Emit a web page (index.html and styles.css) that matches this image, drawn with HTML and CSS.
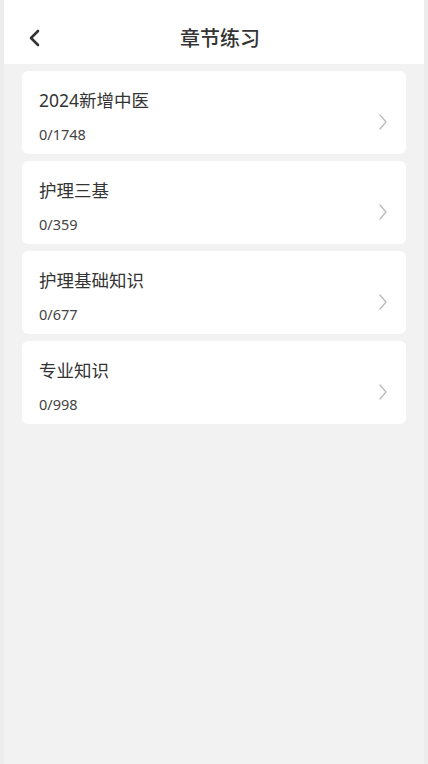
FILE: index.html
```html
<!DOCTYPE html>
<html lang="zh-CN">
<head>
    <meta charset="UTF-8">
    <meta name="viewport" content="width=device-width, initial-scale=1.0">
    <title>章节练习</title>
    <link rel="stylesheet" href="styles.css">
</head>
<body>

    <div class="page">
        <div class="top-bar">
            <span class="back">
                <svg width="14" height="18" viewBox="0 0 14 18">
                    <path d="M10 2 L3 9 L10 16" fill="none" stroke="#333" stroke-width="2.6" stroke-linecap="round" stroke-linejoin="round"/>
                </svg>
            </span>
            <h1>章节练习</h1>
        </div>

        <div class="chapter-list">
            <div class="chapter-card">
                <div class="chapter-info">
                    <div class="chapter-name">2024新增中医</div>
                    <div class="chapter-count">0/1748</div>
                </div>
                <svg class="arrow" width="10" height="18" viewBox="0 0 10 18">
                    <path d="M2 2 L8 9 L2 16" fill="none" stroke="#bdbdbd" stroke-width="1.4" stroke-linecap="round" stroke-linejoin="round"/>
                </svg>
            </div>
            <div class="chapter-card">
                <div class="chapter-info">
                    <div class="chapter-name">护理三基</div>
                    <div class="chapter-count">0/359</div>
                </div>
                <svg class="arrow" width="10" height="18" viewBox="0 0 10 18">
                    <path d="M2 2 L8 9 L2 16" fill="none" stroke="#bdbdbd" stroke-width="1.4" stroke-linecap="round" stroke-linejoin="round"/>
                </svg>
            </div>
            <div class="chapter-card">
                <div class="chapter-info">
                    <div class="chapter-name">护理基础知识</div>
                    <div class="chapter-count">0/677</div>
                </div>
                <svg class="arrow" width="10" height="18" viewBox="0 0 10 18">
                    <path d="M2 2 L8 9 L2 16" fill="none" stroke="#bdbdbd" stroke-width="1.4" stroke-linecap="round" stroke-linejoin="round"/>
                </svg>
            </div>
            <div class="chapter-card">
                <div class="chapter-info">
                    <div class="chapter-name">专业知识</div>
                    <div class="chapter-count">0/998</div>
                </div>
                <svg class="arrow" width="10" height="18" viewBox="0 0 10 18">
                    <path d="M2 2 L8 9 L2 16" fill="none" stroke="#bdbdbd" stroke-width="1.4" stroke-linecap="round" stroke-linejoin="round"/>
                </svg>
            </div>
        </div>
    </div>

</body>
</html>
```

FILE: styles.css
```css
body {
    margin: 0;
    padding: 0;
    background: #ececec;
    font-family: 'Noto Sans', 'Noto Sans CJK SC', sans-serif;
}

.page {
    margin: 0 4px;
    min-height: 764px;
    background: #f2f2f2;
}

.top-bar {
    height: 64px;
    background: #fff;
    display: flex;
    align-items: center;
    justify-content: center;
    position: relative;
}

.back {
    position: absolute;
    left: 24px;
    top: 29px;
    display: flex;
}

h1 {
    margin: 0;
    font-size: 20px;
    font-weight: 500;
    color: #333;
    padding: 10px 0 0 12px;
}

.chapter-list {
    padding: 7px 18px;
    display: flex;
    flex-direction: column;
    gap: 7px;
}

.chapter-card {
    height: 83px;
    background: #fff;
    border-radius: 6px;
    display: flex;
    align-items: flex-start;
    justify-content: space-between;
    padding: 18px 18px 0 17px;
    box-sizing: border-box;
}

.chapter-info {
    display: flex;
    flex-direction: column;
    gap: 14px;
}

.chapter-name {
    font-size: 17.5px;
    line-height: 22px;
    color: #333;
}

.chapter-count {
    font-size: 14.5px;
    line-height: 18px;
    color: #444;
}

.arrow {
    margin-top: 24px;
}
```
